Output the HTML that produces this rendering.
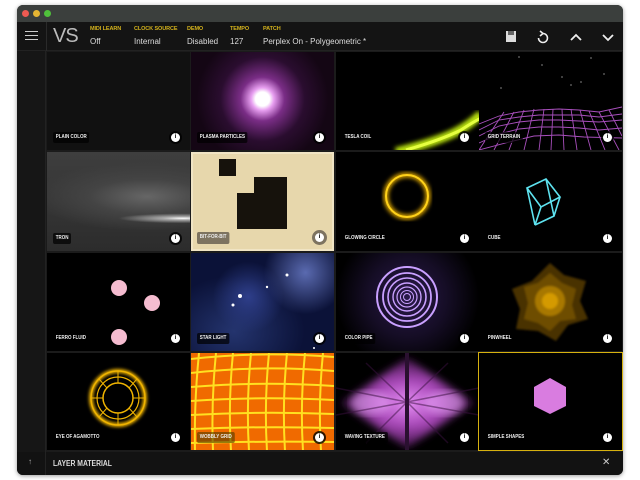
<!DOCTYPE html>
<html><head><meta charset="utf-8"><style>
*{margin:0;padding:0;box-sizing:border-box}
body{width:640px;height:480px;background:#fff;position:relative;overflow:hidden;font-family:"Liberation Sans",sans-serif}
.win{position:absolute;left:17px;top:5px;width:606px;height:470px;background:#161616;border-radius:6px;overflow:hidden;box-shadow:0 1px 4px rgba(0,0,0,.4)}
.tb{position:absolute;left:0;top:0;width:606px;height:17px;background:#3b3f3d}
.dot{position:absolute;top:5px;width:7px;height:7px;border-radius:50%}
.hdr{position:absolute;left:0;top:17px;width:606px;height:29px;background:#141414;border-bottom:1px solid #222}
.lab{position:absolute;top:4px;font-size:5.5px;color:#d4b21c;font-weight:bold;letter-spacing:-.1px}
.val{position:absolute;top:15px;font-size:8px;color:#ddd}
.side{position:absolute;left:0;top:46px;width:29px;height:401px;background:#161616;border-right:1px solid #222}
.grid{position:absolute;left:29px;top:46px;width:577px;height:401px;background:#1b1b1b}
.t{position:absolute;width:143px;height:98px;overflow:hidden;background:#000}
.t svg{position:absolute;left:0;top:0}
.nm{position:absolute;left:6px;bottom:7px;height:11px;padding:0 3px;line-height:11px;font-size:5px;font-weight:bold;color:#eee;background:rgba(0,0,0,.7);border-radius:2px;font-family:"Liberation Sans Narrow","Liberation Sans",sans-serif;transform:scaleX(.9);transform-origin:left}
.i{position:absolute;right:10px;bottom:8px;width:9px;height:9px;border-radius:50%;background:#fff;color:#000;font-size:6px;font-weight:bold;text-align:center;line-height:9px;box-shadow:0 0 0 2px rgba(0,0,0,.8)}
.bot{position:absolute;left:0;top:447px;width:606px;height:23px;background:#121212}
</style></head><body>
<div class="win">
 <div class="tb">
  <div class="dot" style="left:5px;background:#ee5a52"></div>
  <div class="dot" style="left:16px;background:#e6b533"></div>
  <div class="dot" style="left:27px;background:#4fc13b"></div>
 </div>
 <div class="hdr">
  <div style="position:absolute;left:8px;top:9px;width:13px;height:1.4px;background:#ccc;box-shadow:0 4px 0 #ccc,0 8px 0 #ccc"></div>
  <div style="position:absolute;left:29px;top:0;width:1px;height:29px;background:#2a2a2a"></div>
  <div style="position:absolute;left:36px;top:3px;font-size:20px;color:#bbb;letter-spacing:-1px">VS</div>
  <div class="lab" style="left:73px">MIDI LEARN</div><div class="val" style="left:73px">Off</div>
  <div class="lab" style="left:117px">CLOCK SOURCE</div><div class="val" style="left:117px">Internal</div>
  <div class="lab" style="left:170px">DEMO</div><div class="val" style="left:170px">Disabled</div>
  <div class="lab" style="left:213px">TEMPO</div><div class="val" style="left:213px">127</div>
  <div class="lab" style="left:246px">PATCH</div><div class="val" style="left:246px">Perplex On - Polygeometric *</div>
  <svg style="position:absolute;left:486px;top:6px" width="120" height="18" viewBox="0 0 120 18">
   <rect x="3" y="3" width="10" height="11" fill="#ddd"/><rect x="5" y="3" width="6" height="4" fill="#666"/>
   <path d="M40 5.5 A4.5 4.5 0 1 1 35.5 10" fill="none" stroke="#eee" stroke-width="1.6"/><path d="M37 3 L40 5.5 L37 8" fill="none" stroke="#eee" stroke-width="1.6"/>
   <path d="M68 12 L73 7 L78 12" fill="none" stroke="#eee" stroke-width="1.8"/>
   <path d="M100 7 L105 12 L110 7" fill="none" stroke="#eee" stroke-width="1.8"/>
  </svg>
 </div>
 <div class="side"></div>
 <div class="grid">
  <!-- row1 -->
  <div class="t" style="left:1px;top:1px;background:#111"><div class="nm">PLAIN COLOR</div><div class="i">i</div></div>
  <div class="t" style="left:145px;top:1px;background:radial-gradient(circle at 50% 48%,#fff 0,#fff 8%,#e79ef0 13%,#7a2d86 25%,#2a0d2f 48%,#140614 75%)"><div class="nm">PLASMA PARTICLES</div><div class="i">i</div></div>
  <div class="t" style="left:290px;top:1px">
   <svg width="143" height="98"><defs><filter id="b1"><feGaussianBlur stdDeviation="2"/></filter></defs><path d="M60 100 Q100 90 120 80 Q135 72 145 62" stroke="#b8e00a" stroke-width="9" fill="none" filter="url(#b1)"/><path d="M70 98 Q105 88 125 78 Q137 70 145 66" stroke="#e6ff40" stroke-width="3" fill="none"/></svg>
   <div class="nm">TESLA COIL</div><div class="i">i</div></div>
  <div class="t" style="left:433px;top:1px">
   <svg width="143" height="98" stroke="#a84fbc" stroke-width=".9" fill="none">
    <g fill="#ddd" stroke="none"><circle cx="40" cy="5" r=".6"/><circle cx="63" cy="13" r=".6"/><circle cx="112" cy="6" r=".6"/><circle cx="125" cy="22" r=".6"/><circle cx="83" cy="25" r=".6"/><circle cx="102" cy="30" r=".6"/><circle cx="92" cy="33" r=".6"/><circle cx="22" cy="36" r=".6"/></g>
    <path d="M0 72 L20 64 L40 60 L60 58 L80 57 L100 58 L120 60 L143 55"/><path d="M0 78 L20 68 L40 65 L60 63 L80 63 L100 63 L120 65 L143 62"/><path d="M0 84 L20 74 L40 70 L60 68 L80 68 L100 69 L120 70 L143 68"/><path d="M0 91 L20 82 L40 77 L60 75 L80 75 L100 76 L120 78 L143 76"/><path d="M0 98 L30 90 L55 84 L80 83 L105 85 L143 86"/>
    <path d="M0 98 L25 60 M15 98 L35 60 M30 98 L45 58 M45 98 L55 57 M60 98 L65 57 M72 98 L74 57 M85 98 L83 57 M98 98 L92 57 M112 98 L101 58 M126 98 L110 59 M140 98 L120 60 M143 84 L130 58"/>
   </svg>
   <div class="nm">GRID TERRAIN</div><div class="i">i</div></div>
  <!-- row2 -->
  <div class="t" style="left:1px;top:101px;height:99px;background:radial-gradient(ellipse 45% 5% at 95% 67%,#fff 0,#aaa 30%,transparent 100%),radial-gradient(ellipse 80% 35% at 70% 45%,#666 0,#444 50%,transparent 100%),linear-gradient(#3e3e3e,#2c2c2c)"><div class="nm">TRON</div><div class="i">i</div></div>
  <div class="t" style="left:145px;top:101px;height:99px;background:#e7d7ac;border:2px solid #f0e4c4">
   <div style="position:absolute;left:26px;top:5px;width:17px;height:17px;background:#16120c"></div>
   <div style="position:absolute;left:61px;top:23px;width:33px;height:52px;background:#16120c"></div>
   <div style="position:absolute;left:44px;top:39px;width:50px;height:36px;background:#16120c"></div>
   <div class="nm" style="background:#7d7360;left:4px;bottom:5px;height:12px">BIT-FOR-BIT</div><div class="i" style="right:8px;bottom:7px;box-shadow:0 0 0 3px #7d7360">i</div></div>
  <div class="t" style="left:290px;top:101px;height:99px">
   <svg width="143" height="99"><defs><filter id="b2"><feGaussianBlur stdDeviation="2"/></filter></defs><circle cx="71" cy="44" r="21" stroke="#e0a800" stroke-width="5" fill="none" filter="url(#b2)"/><circle cx="71" cy="44" r="21" stroke="#ffd21a" stroke-width="2" fill="none"/></svg>
   <div class="nm">GLOWING CIRCLE</div><div class="i">i</div></div>
  <div class="t" style="left:433px;top:101px;height:99px">
   <svg width="143" height="99" stroke="#5ee3f0" stroke-width="1.6" fill="none"><path d="M48 36 L67 27 L81 45 L62 55 Z M56 73 L75 64 L81 45 M48 36 L56 73 M62 55 L56 73 M67 27 L75 64" /></svg>
   <div class="nm">CUBE</div><div class="i">i</div></div>
  <!-- row3 -->
  <div class="t" style="left:1px;top:202px">
   <svg width="143" height="98" fill="#f5bcd0"><circle cx="72" cy="35" r="8"/><circle cx="105" cy="50" r="8"/><circle cx="72" cy="84" r="8"/></svg>
   <div class="nm" style="background:none">FERRO FLUID</div><div class="i">i</div></div>
  <div class="t" style="left:145px;top:202px;background:radial-gradient(circle at 80% 20%,#5a6ab0 0,transparent 30%),radial-gradient(circle at 40% 45%,#2e3e8a 0,transparent 35%),radial-gradient(ellipse at 30% 80%,#24346e 0,transparent 50%),#0b1238">
   <svg width="143" height="98" fill="#fff"><circle cx="49" cy="43" r="2"/><circle cx="42" cy="52" r="1.5"/><circle cx="76" cy="34" r="1.2"/><circle cx="96" cy="22" r="1.5"/><circle cx="123" cy="95" r="1"/></svg>
   <div class="nm">STAR LIGHT</div><div class="i">i</div></div>
  <div class="t" style="left:290px;top:202px;background:radial-gradient(circle at 50% 45%,#2a1a4a 0,#150d25 45%,#000 80%)">
   <svg width="143" height="98" fill="none" stroke="#c9a0ff"><circle cx="71" cy="44" r="30" stroke-width="2"/><circle cx="71" cy="44" r="24" stroke-width="1.8"/><circle cx="71" cy="44" r="19" stroke-width="1.6"/><circle cx="71" cy="44" r="14" stroke-width="1.4"/><circle cx="71" cy="44" r="10" stroke-width="1.2"/><circle cx="71" cy="44" r="6.5" stroke-width="1"/><circle cx="71" cy="44" r="3.5" stroke-width="1"/></svg>
   <div class="nm">COLOR PIPE</div><div class="i">i</div></div>
  <div class="t" style="left:433px;top:202px">
   <svg width="143" height="98"><defs><filter id="b4"><feGaussianBlur stdDeviation="1"/></filter></defs><g transform="translate(71 48)" filter="url(#b4)"><path d="M0 -38 L14 -26 L36 -20 L30 0 L38 18 L18 24 L6 40 L-12 30 L-34 28 L-30 8 L-38 -12 L-18 -20 Z" fill="#4a3300"/><path d="M0 -28 L12 -18 L26 -12 L22 4 L26 18 L10 20 L0 30 L-12 22 L-26 18 L-22 2 L-26 -14 L-12 -18 Z" fill="#6e4d00"/><circle r="15" fill="#a87800"/><circle r="8" fill="#d49a00"/></g></svg>
   <div class="nm">PINWHEEL</div><div class="i">i</div></div>
  <!-- row4 -->
  <div class="t" style="left:1px;top:302px;height:97px">
   <svg width="143" height="98" fill="none" stroke="#f0b400"><defs><filter id="b3"><feGaussianBlur stdDeviation="1.5"/></filter></defs><circle cx="71" cy="45" r="27" stroke-width="4" filter="url(#b3)"/><circle cx="71" cy="45" r="27" stroke-width="1.5"/><circle cx="71" cy="45" r="21" stroke-width="1.2"/><circle cx="71" cy="45" r="15" stroke-width="1.5"/><path d="M71 18 V30 M90 26 L82 35 M98 45 H86 M90 64 L82 55 M71 72 V60 M52 64 L60 55 M44 45 H56 M52 26 L60 35" stroke-width="1"/></svg>
   <div class="nm" style="background:none">EYE OF AGAMOTTO</div><div class="i">i</div></div>
  <div class="t" style="left:145px;top:302px;height:97px;background:#f06a00">
   <svg width="143" height="98" stroke="#ffe020" stroke-width="2" fill="none"><path d="M0 6 Q70 -2 143 4 M0 20 Q70 12 143 18 M0 34 Q70 28 143 33 M0 48 Q70 43 143 47 M0 62 Q70 58 143 61 M0 76 Q70 73 143 75 M0 90 Q70 88 143 89"/><path d="M8 0 Q3 50 4 98 M25 0 Q20 50 22 98 M42 0 Q37 50 40 98 M60 0 Q55 50 58 98 M78 0 Q73 50 76 98 M96 0 Q91 50 94 98 M114 0 Q109 50 112 98 M132 0 Q127 50 130 98"/></svg>
   <div class="nm" style="background:rgba(80,60,0,.6)">WOBBLY GRID</div><div class="i">i</div></div>
  <div class="t" style="left:290px;top:302px;height:97px">
   <svg width="143" height="98"><defs><filter id="b5"><feGaussianBlur stdDeviation="4"/></filter><radialGradient id="g1" cx="50%" cy="50%" r="50%"><stop offset="0" stop-color="#e690f5"/><stop offset=".5" stop-color="#a848b8"/><stop offset="1" stop-color="#3a1040"/></radialGradient></defs><g filter="url(#b5)"><path d="M5 50 L71 5 L138 50 L71 95 Z" fill="url(#g1)"/></g><ellipse cx="35" cy="50" rx="20" ry="12" fill="#f0b0ff" opacity=".5" filter="url(#b5)"/><ellipse cx="108" cy="50" rx="20" ry="12" fill="#f0b0ff" opacity=".5" filter="url(#b5)"/><rect x="69" y="0" width="4" height="98" fill="#2a1030"/><g stroke="#3a1040" stroke-width="1.5" opacity=".5"><path d="M71 49 L0 35 M71 49 L0 62 M71 49 L143 35 M71 49 L143 62 M71 49 L30 10 M71 49 L112 10 M71 49 L30 90 M71 49 L112 90"/></g></svg>
   <div class="nm">WAVING TEXTURE</div><div class="i">i</div></div>
  <div class="t" style="left:432px;top:301px;width:145px;height:99px;border:1.5px solid #d6b10f">
   <svg width="143" height="96"><path d="M71 25 L87 34 L87 53 L71 61 L55 53 L55 34 Z" fill="#d97ce0"/></svg>
   <div class="nm" style="background:none">SIMPLE SHAPES</div><div class="i">i</div></div>
 </div>
 <div class="bot">
  <div style="position:absolute;left:0;top:0;width:29px;height:23px;border-right:1px solid #222"></div>
  <div style="position:absolute;left:11px;top:5px;font-size:8px;color:#aaa">↑</div>
  <div style="position:absolute;left:36px;top:7px;font-size:8px;color:#ddd;font-weight:bold;transform:scaleX(.85);transform-origin:left">LAYER MATERIAL</div>
  <div style="position:absolute;left:585px;top:5px;font-size:10px;color:#ccc">✕</div>
 </div>
</div>
</body></html>
